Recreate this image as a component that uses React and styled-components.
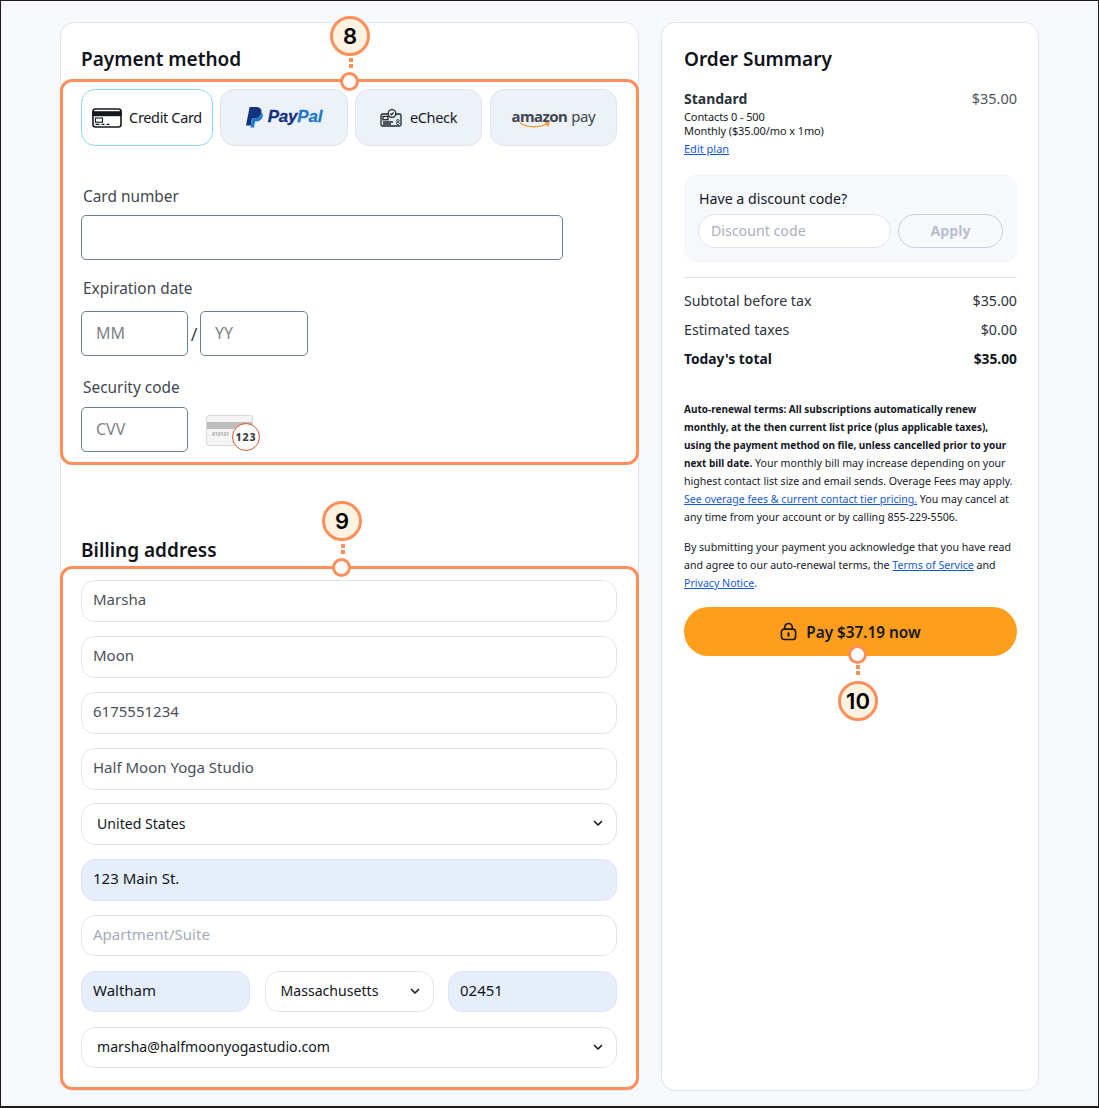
import React from "react";
import styled, { createGlobalStyle } from "styled-components";

const Global = createGlobalStyle`
  html, body { margin: 0; padding: 0; }
  body { background: #f6f8fc; font-family: "Noto Sans", "Inter", sans-serif; color: #0f1217; }
  * { box-sizing: border-box; }
`;

const Page = styled.div`
  width: 1099px;
  height: 1108px;
  border: 1px solid #1c1c1c;
  border-bottom-width: 2px;
  background: #f6f8fc;
  padding: 21px 59px 0 59px;
  display: flex;
  gap: 22px;
  align-items: flex-start;
`;

const Card = styled.div`
  position: relative;
  background: #fff;
  border: 1px solid #dfe4ee;
  border-radius: 14px;
  height: 1069px;
  width: ${p => p.$w}px;
`;

const LeftInner = styled.div`
  display: flex;
  flex-direction: column;
  margin: -1px;
`;

const SectionTitle = styled.h2`
  margin: 0;
  padding-left: 21px;
  font-size: 19px;
  line-height: 26px;
  font-weight: 600;
  color: #10141a;
  height: ${p => p.$h}px;
  padding-top: ${p => p.$top}px;
`;

const Highlight = styled.section`
  position: relative;
  border: 3px solid #ff8f5a;
  border-radius: 12px;
  padding: ${p => p.$pad};
  height: ${p => p.$h}px;
`;

const Tabs = styled.div`
  display: flex;
  gap: 7px;
`;

const Tab = styled.div`
  width: ${p => p.$w}px;
  height: 57px;
  flex: none;
  margin-left: ${p => p.$ml || 0}px;
  border-radius: 14px;
  border: 1px solid ${p => (p.$active ? "#8adcf8" : "#dfe4ee")};
  background: ${p => (p.$active ? "#fff" : "#edf1f8")};
  display: flex;
  align-items: center;
  justify-content: center;
  gap: ${p => p.$gap}px;
  font-size: 14.5px;
  letter-spacing: -0.35px;
  color: #14181f;
  & > span { position: relative; top: -1px; }
`;

const PayPalText = styled.span`
  font-family: "Liberation Sans", sans-serif;
  font-style: italic;
  font-weight: 700;
  font-size: 17px;
  color: #14337f;
  letter-spacing: -0.2px;
  -webkit-text-stroke: 0.3px currentColor;
  & > b { color: #1f7bc9; }
`;

const AmazonWrap = styled.div`
  position: relative;
  display: flex;
  gap: 4px;
  font-size: 15px;
  line-height: 20px;
  color: #41474f;
  padding-bottom: 3px;
  & > b { font-weight: 700; letter-spacing: -0.6px; }
  & > svg { position: absolute; left: 7px; top: 16px; }
`;

const Label = styled.div`
  font-size: 15.4px;
  line-height: 20px;
  color: #3f4650;
  padding-left: 2px;
  margin: ${p => p.$m};
`;

const Box = styled.div`
  width: ${p => p.$w}px;
  height: 45px;
  flex: none;
  border: 1px solid #6c7f8f;
  border-radius: 5px;
  font-size: 16px;
  color: #7d8389;
  display: flex;
  align-items: center;
  padding: 0 0 2px 14px;
`;

const DateRow = styled.div`
  display: flex;
  align-items: center;
  font-size: 18px;
  color: #3f4650;
`;

const Slash = styled.span`
  width: 12px;
  text-align: center;
`;

const CvvRow = styled.div`
  display: flex;
  align-items: center;
  gap: 18px;
`;

const CvvCard = styled.div`
  position: relative;
  width: 47px;
  height: 31px;
  margin-top: 2px;
  border: 1px solid #d9d9d9;
  border-radius: 3px;
  background: #f4f4f4;
  &::before {
    content: "";
    position: absolute;
    left: 0;
    right: 0;
    top: 6px;
    height: 7px;
    background: #bdbdbd;
  }
`;

const CvvDigits = styled.span`
  position: absolute;
  left: 5px;
  top: 15px;
  font-size: 5px;
  line-height: 7px;
  color: #aaa;
  font-weight: 700;
`;

const CvvBadge = styled.span`
  position: absolute;
  left: 25px;
  top: 7px;
  width: 28px;
  height: 28px;
  border-radius: 50%;
  border: 1px solid #e0562a;
  background: #fff;
  display: flex;
  align-items: center;
  justify-content: center;
  font-size: 10.5px;
  font-weight: 800;
  letter-spacing: 1px;
  color: #3d3d3d;
`;

const Fields = styled.div`
  display: flex;
  flex-direction: column;
`;

const Field = styled.div`
  height: ${p => p.$h || 42}px;
  flex: none;
  min-width: 0;
  margin-top: ${p => p.$mt || 0}px;
  border: 1px solid #dfe4ee;
  border-radius: 14px;
  background: ${p => (p.$fill ? "#e7eefb" : "#fff")};
  display: flex;
  align-items: center;
  justify-content: space-between;
  padding: 0 ${p => (p.$select ? 12 : 11)}px ${p => (p.$select ? 2 : 4)}px ${p => (p.$select ? 15 : 11)}px;
  font-size: ${p => (p.$select ? 14.1 : 15)}px;
  white-space: nowrap;
  color: ${p => (p.$muted ? "#a5abb6" : p.$strong ? "#11161d" : "#4a505b")};
  & > svg { flex: none; }
`;

const FieldRow = styled.div`
  display: grid;
  grid-template-columns: repeat(3, 1fr);
  column-gap: 14.5px;
  margin-top: 15px;
`;

const Right = styled.div`
  padding: 0 21px 0 22px;
  display: flex;
  flex-direction: column;
`;

const SumTitle = styled.h2`
  margin: 0;
  padding-top: 23px;
  height: 66px;
  font-size: 19px;
  line-height: 26px;
  font-weight: 600;
`;

const Between = styled.div`
  display: flex;
  justify-content: space-between;
  align-items: ${p => p.$align || "center"};
  font-size: ${p => (p.$bold ? 13.8 : 14.2)}px;
  line-height: 20px;
  font-weight: ${p => (p.$bold ? 700 : 400)};
  margin-top: ${p => p.$mt || 0}px;
  color: ${p => (p.$bold ? "#11161d" : "#2c323b")};
`;

const PlanName = styled.div`
  font-size: 14px;
  line-height: 20px;
  font-weight: 700;
`;

const Price = styled.span`
  font-size: 14.5px;
  line-height: 18px;
  color: #4d535d;
`;

const Small = styled.div`
  font-size: 11px;
  line-height: 14px;
  color: #14181f;
  letter-spacing: -0.1px;
  margin-top: ${p => p.$mt || 0}px;
`;

const Link = styled.a`
  color: #1558d6;
  text-decoration: underline;
`;

const EditLine = styled.div`
  font-size: 11px;
  line-height: 14px;
  margin-top: 4px;
`;

const Discount = styled.div`
  margin-top: 18px;
  height: 89px;
  border-radius: 14px;
  background: #f6f8fc;
  padding: 15px 14px 0 14px;
`;

const DiscountLabel = styled.div`
  font-size: 14.2px;
  line-height: 20px;
  padding-left: 1px;
  color: #14181f;
`;

const DiscountRow = styled.div`
  display: flex;
  gap: 7px;
  margin-top: 5px;
`;

const DiscountInput = styled.div`
  width: 193px;
  flex: none;
  height: 34px;
  border-radius: 17px;
  background: #fff;
  border: 1px solid #dfe4ee;
  display: flex;
  align-items: center;
  padding: 0 0 2px 12px;
  font-size: 14.2px;
  color: #a9afba;
`;

const ApplyBtn = styled.div`
  width: 105px;
  flex: none;
  height: 34px;
  border-radius: 17px;
  border: 1px solid #c8cfdc;
  display: flex;
  align-items: center;
  justify-content: center;
  padding-bottom: 2px;
  font-size: 14.2px;
  font-weight: 700;
  color: #b9c0cd;
`;

const Divider = styled.div`
  height: 1px;
  background: #dfe4ee;
  margin-top: 14px;
`;

const Terms = styled.p`
  margin: ${p => p.$m};
  font-size: 10.6px;
  line-height: 18px;
  color: #14181f;
  white-space: nowrap;
  & b { font-weight: 700; font-size: 10px; }
`;

const PayButton = styled.div`
  margin-top: 15px;
  height: 49px;
  border-radius: 25px;
  background: #ff9d1c;
  display: flex;
  align-items: center;
  justify-content: center;
  gap: 9px;
  font-size: 15.3px;
  font-weight: 600;
  color: #14181f;
`;

const Bubble = styled.div`
  position: absolute;
  left: ${p => p.$x}px;
  top: ${p => p.$y}px;
  width: 40px;
  height: 40px;
  border-radius: 50%;
  border: 3px solid #ff8f5a;
  background: #fef2e0;
  display: flex;
  align-items: center;
  justify-content: center;
  font-size: 22px;
  font-weight: 600;
  color: #000;
  font-family: "Inter", sans-serif;
  z-index: 3;
`;

const Dot = styled.div`
  position: absolute;
  left: ${p => p.$x}px;
  top: ${p => p.$y}px;
  width: 19px;
  height: 19px;
  border-radius: 50%;
  border: 3px solid #ff8f5a;
  background: #fff;
  z-index: 3;
`;

const Dash = styled.div`
  position: absolute;
  left: ${p => p.$x}px;
  top: ${p => p.$y}px;
  width: 4px;
  height: 12px;
  background: repeating-linear-gradient(to bottom, #ff8f5a 0 4px, transparent 4px 6px);
  z-index: 2;
`;

const Chevron = () => (
  <svg width="12" height="12" viewBox="0 0 12 12" fill="none" stroke="#1a1f26" strokeWidth="1.7" strokeLinecap="round" strokeLinejoin="round">
    <path d="M2.5 4.5 6 8l3.5-3.5" />
  </svg>
);

const CardIcon = () => (
  <svg width="30" height="20" viewBox="0 0 30 20" fill="none" stroke="#14181f" strokeWidth="1.6">
    <rect x="1" y="1" width="28" height="18" rx="2.5" />
    <rect x="1" y="4" width="28" height="3.4" fill="#14181f" />
    <rect x="3.5" y="10" width="7" height="4.2" strokeWidth="1.1" />
    <path d="M3.5 16.4h4M9.500 16.4h3M14.500 16.4h3" strokeWidth="1.2" />
  </svg>
);

const PayPalMark = () => (
  <svg width="17" height="21" viewBox="0 0 17 21">
    <path fill="#14337f" d="M3.600 0h6.400c3.600 0 6 1.900 5.400 5.400-.6 3.900-3.300 6-7 6H5.900L4.800 18.400H0z" />
    <path fill="#1f7bc9" d="M15.900 5.400c.9.900 1.200 2.100.9 3.700-.6 3.400-3 5.300-6.200 5.300H9l-.9 6.200H4.500l.4-2.700 1.100-6.600h2.200c3.800 0 6.700-2.100 7.500-5.900z" />
  </svg>
);

const CheckIcon = () => (
  <svg width="22" height="18" viewBox="0 0 22 18" fill="none" stroke="#23272e" strokeWidth="1.3">
    <rect x="1" y="5" width="20" height="12" rx="1.5" fill="#e3e7ee" />
    <circle cx="12" cy="4.500" r="3.800" fill="#edf1f8" />
    <path d="m10.400 4.500 1.200 1.200 2-2.200" />
    <rect x="3" y="7.500" width="5" height="3.200" fill="#fff" />
    <path d="M3 13h10M3 15h8" />
    <path d="M17.800 10.500a1.200 1.200 0 1 0 .01 0M17.800 13a1.300 1.300 0 1 0 .01 0" strokeWidth="1" />
  </svg>
);

const LockIcon = () => (
  <svg width="17" height="19" viewBox="0 0 18 19" fill="none" stroke="#14181f" strokeWidth="1.7">
    <rect x="1.500" y="7" width="15" height="11" rx="3" />
    <path d="M5 7V5a4 4 0 0 1 8 0v2" />
    <path d="M9 11.500v2.500" strokeWidth="2.200" strokeLinecap="round" />
  </svg>
);

export default function App() {
  return (
    <>
      <Global />
      <Page>
        <Card $w={579}>
          <LeftInner>
            <SectionTitle $h={57} $top={24}>Payment method</SectionTitle>
            <Highlight $h={386} $pad="7px 19px 0 18px">
              <Tabs>
                <Tab $w={132} $gap={7} $active>
                  <CardIcon />
                  <span>Credit Card</span>
                </Tab>
                <Tab $w={128} $gap={5}>
                  <PayPalMark />
                  <PayPalText>Pay<b>Pal</b></PayPalText>
                </Tab>
                <Tab $w={127} $gap={8}>
                  <CheckIcon />
                  <span>eCheck</span>
                </Tab>
                <Tab $w={127} $ml={1}>
                  <AmazonWrap>
                    <b>amazon</b>
                    <span>pay</span>
                    <svg width="32" height="7" viewBox="0 0 32 7" fill="none">
                      <path d="M1 1c8 5 20 5 29 0M26 .8l4 .2-1.500 3.500" stroke="#f79c34" strokeWidth="1.4" />
                    </svg>
                  </AmazonWrap>
                </Tab>
              </Tabs>
              <Label $m="41px 0 8px">Card number</Label>
              <Box $w={482} />
              <Label $m="19px 0 12px">Expiration date</Label>
              <DateRow>
                <Box $w={107}>MM</Box>
                <Slash>/</Slash>
                <Box $w={108}>YY</Box>
              </DateRow>
              <Label $m="22px 0 9px">Security code</Label>
              <CvvRow>
                <Box $w={107}>CVV</Box>
                <CvvCard>
                  <CvvDigits>010101</CvvDigits>
                  <CvvBadge>123</CvvBadge>
                </CvvCard>
              </CvvRow>
            </Highlight>
            <SectionTitle $h={101} $top={72}>Billing address</SectionTitle>
            <Highlight $h={524} $pad="11px 19px 0 18px">
              <Fields>
                <Field>Marsha</Field>
                <Field $mt={14}>Moon</Field>
                <Field $mt={14}>6175551234</Field>
                <Field $mt={14}>Half Moon Yoga Studio</Field>
                <Field $mt={13} $select $strong>United States<Chevron /></Field>
                <Field $mt={14} $fill $strong>123 Main St.</Field>
                <Field $mt={14} $h={41} $muted>Apartment/Suite</Field>
                <FieldRow>
                  <Field $h={41} $fill $strong>Waltham</Field>
                  <Field $h={41} $select $strong>Massachusetts<Chevron /></Field>
                  <Field $h={41} $fill $strong>02451</Field>
                </FieldRow>
                <Field $mt={15} $h={41} $select $strong>marsha@halfmoonyogastudio.com<Chevron /></Field>
              </Fields>
            </Highlight>
          </LeftInner>
          <Bubble $x={269} $y={-7}>8</Bubble>
          <Dash $x={288} $y={35} />
          <Dot $x={279} $y={49} />
          <Bubble $x={261} $y={478}>9</Bubble>
          <Dash $x={280} $y={521} />
          <Dot $x={271} $y={535} />
        </Card>
        <Card $w={378}>
          <Right>
            <SumTitle>Order Summary</SumTitle>
            <Between $align="flex-start">
              <div>
                <PlanName>Standard</PlanName>
                <Small $mt={1}>Contacts 0 - 500</Small>
                <Small>Monthly ($35.00/mo x 1mo)</Small>
                <EditLine><Link>Edit plan</Link></EditLine>
              </div>
              <Price>$35.00</Price>
            </Between>
            <Discount>
              <DiscountLabel>Have a discount code?</DiscountLabel>
              <DiscountRow>
                <DiscountInput>Discount code</DiscountInput>
                <ApplyBtn>Apply</ApplyBtn>
              </DiscountRow>
            </Discount>
            <Divider />
            <Between $mt={13}><span>Subtotal before tax</span><span>$35.00</span></Between>
            <Between $mt={9}><span>Estimated taxes</span><span>$0.00</span></Between>
            <Between $mt={9} $bold><span>Today's total</span><span>$35.00</span></Between>
            <Terms $m="31px 0 0">
              <b>Auto-renewal terms: All subscriptions automatically renew<br />
              monthly, at the then current list price (plus applicable taxes),<br />
              using the payment method on file, unless cancelled prior to your<br />
              next bill date.</b> Your monthly bill may increase depending on your<br />
              highest contact list size and email sends. Overage Fees may apply.<br />
              <Link>See overage fees &amp; current contact tier pricing.</Link> You may cancel at<br />
              any time from your account or by calling 855-229-5506.
            </Terms>
            <Terms $m="12px 0 0">
              By submitting your payment you acknowledge that you have read<br />
              and agree to our auto-renewal terms, the <Link>Terms of Service</Link> and<br />
              <Link>Privacy Notice</Link>.
            </Terms>
            <PayButton><LockIcon />Pay $37.19 now</PayButton>
          </Right>
          <Dot $x={186} $y={622} />
          <Dash $x={194} $y={642} />
          <Bubble $x={176} $y={658}>10</Bubble>
        </Card>
      </Page>
    </>
  );
}
